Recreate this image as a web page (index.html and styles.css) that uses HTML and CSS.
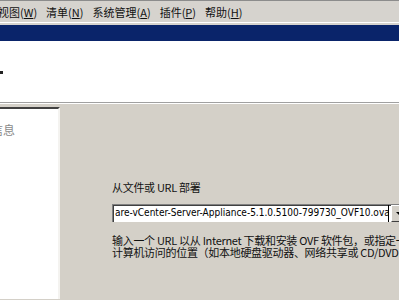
FILE: index.html
```html
<!DOCTYPE html>
<html lang="zh-CN">
  <head>
    <meta charset="UTF-8" />
    <title>部署 OVF 模板</title>
    <link rel="stylesheet" href="styles.css">
  </head>
  <body>
    <div class="menubar">
      <span class="menu-item">视图(<u>W</u>)</span>
      <span class="menu-item">清单(<u>N</u>)</span>
      <span class="menu-item">系统管理(<u>A</u>)</span>
      <span class="menu-item">插件(<u>P</u>)</span>
      <span class="menu-item">帮助(<u>H</u>)</span>
    </div>
    <div class="titlebar"></div>
    <div class="header">
      <span class="header-mark"></span>
    </div>
    <div class="wizard">
      <div class="steps">
        <p class="step">信息</p>
      </div>
      <div class="page">
        <p class="label">从文件或 URL 部署</p>
        <div class="combo">
          <div class="combo-text">are-vCenter-Server-Appliance-5.1.0.5100-799730_OVF10.ova</div>
          <div class="combo-btn"></div>
        </div>
        <p class="desc">输入一个 URL 以从 Internet 下载和安装 OVF 软件包，或指定一台可从您的计算机</p>
        <p class="desc">计算机访问的位置（如本地硬盘驱动器、网络共享或 CD/DVD 驱动器）。</p>
      </div>
    </div>
  </body>
</html>
```

FILE: styles.css
```css
* {
  margin: 0;
  padding: 0;
  box-sizing: border-box;
}

body {
  width: 399px;
  height: 300px;
  overflow: hidden;
  background-color: #d4d0c8;
  font-family: Tahoma, "DejaVu Sans", "Noto Sans CJK SC", sans-serif;
  font-size: 12px;
  color: #000;
}

.menubar {
  height: 23px;
  border-top: 1px solid #8c8c8c;
  border-bottom: 1px solid #fff;
  background-color: #d6d3ce;
  display: flex;
  align-items: center;
  white-space: nowrap;
}

.menu-item {
  margin-right: 9px;
  line-height: 14px;
  font-family: "Noto Sans CJK SC", sans-serif;
  font-size: 11px;
  color: #111;
}

.menu-item:first-child {
  margin-left: -2px;
}

.titlebar {
  height: 18px;
  border-top: 2px solid #d6d3ce;
  background-color: #0a246a;
}

.header {
  height: 62px;
  background-color: #fff;
  border-bottom: 1px solid #a0a0a0;
  position: relative;
}

.header-mark {
  position: absolute;
  left: 0;
  top: 30px;
  width: 3px;
  height: 3px;
  background-color: #222;
}

.wizard {
  display: flex;
  height: 196px;
  border-top: 1px solid #fff;
}

.steps {
  width: 60px;
  margin-top: 3px;
  background-color: #fff;
  border-top: 2px solid #404040;
  border-right: 2px solid #f4f3f0;
}

.step {
  margin-top: 14px;
  margin-left: -9px;
  font-family: "Noto Sans CJK SC", sans-serif;
  font-size: 12px;
  line-height: 14px;
  color: #8a8a8a;
}

.page {
  flex: 1;
  padding-left: 52px;
  padding-top: 77px;
  white-space: nowrap;
  overflow: hidden;
}

.label {
  font-family: "Noto Sans CJK SC", sans-serif;
  font-size: 11px;
  line-height: 12px;
  letter-spacing: -0.3px;
  color: #111;
}

.combo {
  display: flex;
  width: 300px;
  height: 18px;
  margin-top: 11px;
  background-color: #fff;
  border-top: 1px solid #808080;
  border-left: 1px solid #808080;
  box-shadow: inset 1px 1px 0 #404040;
}

.combo-text {
  width: 276px;
  overflow: hidden;
  padding-left: 2px;
  font-family: "DejaVu Sans Condensed", "DejaVu Sans", sans-serif;
  font-size: 10px;
  line-height: 16px;
  border-right: 1px solid #000;
}

.combo-btn {
  width: 16px;
  margin-left: 2px;
  background-color: #d4d0c8;
  border: 1px solid #fff;
  border-right-color: #404040;
  border-bottom-color: #404040;
  position: relative;
}

.combo-btn::after {
  content: "";
  position: absolute;
  left: 4px;
  top: 6px;
  border-left: 3px solid transparent;
  border-right: 3px solid transparent;
  border-top: 3px solid #000;
}

.desc {
  font-family: "Noto Sans CJK SC", sans-serif;
  font-size: 11px;
  line-height: 12px;
  letter-spacing: -0.3px;
  color: #111;
}

.combo + .desc {
  margin-top: 12px;
}
```
